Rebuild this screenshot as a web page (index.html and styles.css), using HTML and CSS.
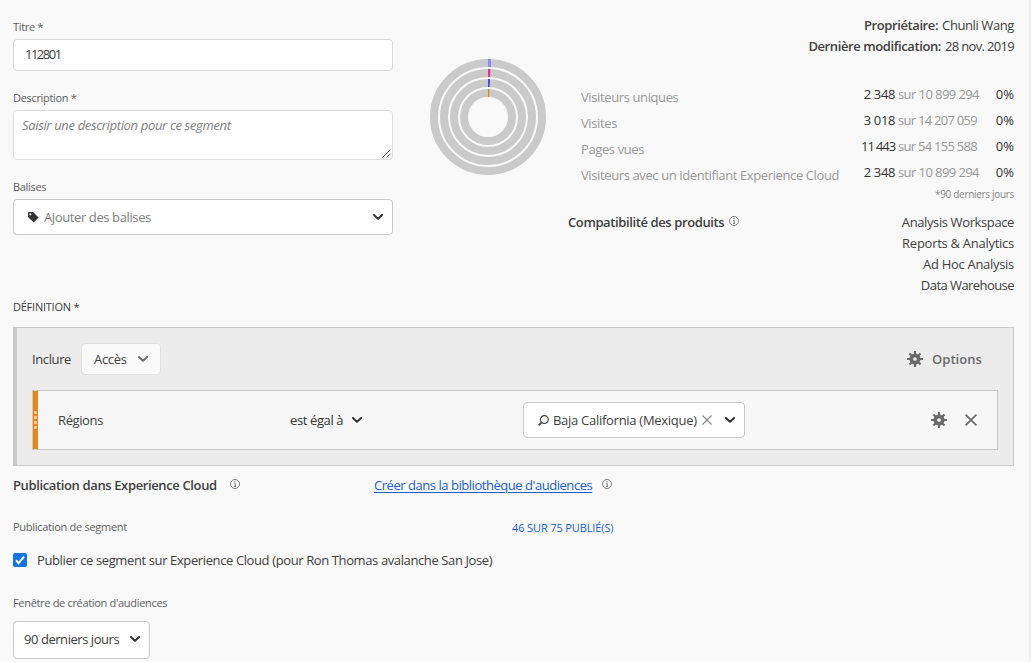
FILE: index.html
```
<!DOCTYPE html>
<html lang="fr">
<head>
<meta charset="utf-8">
<title>Créateur de segments</title>
<link rel="stylesheet" href="styles.css">
</head>
<body>
<svg class="defs" width="0" height="0" aria-hidden="true">
  <symbol id="chevron" viewBox="0 0 10 6"><path d="M1 1l4 3.9L9 1" fill="none" stroke="currentColor" stroke-width="2" stroke-linecap="round" stroke-linejoin="round"/></symbol>
  <symbol id="info" viewBox="0 0 10 10"><circle cx="5" cy="5" r="4.5" fill="none" stroke="currentColor" stroke-width=".8"/><path d="M4.200 4.400h1v3M4.100 7.500h1.900" fill="none" stroke="currentColor" stroke-width=".8"/><circle cx="5" cy="2.700" r=".6" fill="currentColor"/></symbol>
  <symbol id="gear" viewBox="0 0 16 16"><g fill="none" stroke="currentColor"><circle cx="8" cy="8" r="3.700" stroke-width="3.700"/><path d="M8 0v3M8 13v3M0 8h3M13 8h3M2.500 2.500l2 2M11.500 11.500l2 2M2.500 13.500l2-2M11.500 4.500l2-2" stroke-width="2.200"/></g></symbol>
</svg>
<main class="page">
  <section class="top">
    <div class="form">
      <label class="label">Titre *</label>
      <div class="input title-input"><span class="digits">112801</span></div>
      <label class="label">Description *</label>
      <div class="input description"><em>Saisir une description pour ce segment</em>
        <svg class="grip" width="9" height="9" viewBox="0 0 9 9"><path d="M.5 8.500l8-8M4.500 8.500l4-4" stroke="#555" fill="none"/></svg>
      </div>
      <label class="label">Balises</label>
      <div class="input tags">
        <svg width="11" height="11" viewBox="0 0 11 11"><path fill="#323232" fill-rule="evenodd" d="M.7 0H5l5.600 5.500-4.900 5L0 5V.7Q0 0 .7 0zM2.300 1.200a1.100 1.100 0 1 0 0 2.200 1.100 1.100 0 0 0 0-2.200z"/></svg>
        <span>Ajouter des balises</span>
        <svg class="chev"><use href="#chevron"/></svg>
      </div>
    </div>
    <svg class="rings" viewBox="0 0 116 116">
      <g fill="none" stroke="#cacaca" stroke-width="8"><circle cx="58" cy="58" r="54"/><circle cx="58" cy="58" r="44"/><circle cx="58" cy="58" r="34"/><circle cx="58" cy="58" r="24"/></g>
      <path fill="#9088f8" d="M58 0h3v8h-3z"/><path fill="#dc3395" d="M58 10h2.500l-.4 8H58z"/><path fill="#4c48d4" d="M58 20h2l-.4 8H58z"/><path fill="#e68619" d="M58 30h1.400l-.2 8H58z"/>
    </svg>
    <div class="summary">
      <div class="meta"><b>Propriétaire:</b> <span class="name">Chunli Wang</span></div>
      <div class="meta"><b>Dernière modification:</b> <span class="date">28 nov. 2019</span></div>
      <div class="stats">
        <span class="metric">Visiteurs uniques</span><span class="count">2 348</span><span class="total">sur 10 899 294</span><span class="pct">0%</span>
        <span class="metric">Visites</span><span class="count">3 018</span><span class="total tight">sur 14 207 059</span><span class="pct">0%</span>
        <span class="metric">Pages vues</span><span class="count ones">11 443</span><span class="total tight">sur 54 155 588</span><span class="pct">0%</span>
        <span class="metric">Visiteurs avec un identifiant Experience Cloud</span><span class="count">2 348</span><span class="total">sur 10 899 294</span><span class="pct">0%</span>
      </div>
      <div class="note">*90 derniers jours</div>
      <div class="compat">
        <div class="compat-title"><b>Compatibilité des produits</b><svg class="info"><use href="#info"/></svg></div>
        <div class="products"><div>Analysis Workspace</div><div class="reports">Reports &amp; Analytics</div><div class="adhoc">Ad Hoc Analysis</div><div class="warehouse">Data Warehouse</div></div>
      </div>
    </div>
  </section>

  <h2 class="definition-title">DÉFINITION *</h2>
  <section class="definition">
    <div class="container-head">
      <span>Inclure</span>
      <button class="access"><span>Accès</span><svg class="chev grey"><use href="#chevron"/></svg></button>
      <span class="options"><svg class="gear"><use href="#gear"/></svg><b>Options</b></span>
    </div>
    <div class="rule">
      <span class="handle"><i></i><i></i><i></i><i></i></span>
      <span class="dimension">Régions</span>
      <span class="operator">est égal à <svg class="chev"><use href="#chevron"/></svg></span>
      <div class="input value">
        <svg width="11" height="11" viewBox="0 0 11 11"><g fill="none" stroke="#3c3c3c"><circle cx="6.400" cy="4.600" r="3.900" stroke-width="1.200"/><path d="M3.500 7.500L.6 10.400" stroke-width="1.700"/></g></svg>
        <span>Baja California (Mexique)</span>
        <svg class="clear" width="10" height="10" viewBox="0 0 10 10"><path d="M.5.5l9 9M9.500.5l-9 9" stroke="#868686" stroke-width="1.100"/></svg>
        <svg class="chev"><use href="#chevron"/></svg>
      </div>
      <span class="rule-actions"><svg class="gear"><use href="#gear"/></svg><svg width="12" height="12" viewBox="0 0 12 12"><path d="M.6.6l10.800 10.800M11.400.6L.6 11.400" stroke="#6a6a6a" stroke-width="1.700"/></svg></span>
    </div>
  </section>

  <section class="publish-head">
    <b>Publication dans Experience Cloud</b><svg class="info"><use href="#info"/></svg>
    <a class="library">Créer dans la bibliothèque d'audiences</a><svg class="info second"><use href="#info"/></svg>
  </section>
  <section class="publish-row">
    <span class="label">Publication de segment</span>
    <a class="published">46 SUR 75 PUBLIÉ(S)</a>
  </section>
  <label class="check-row">
    <svg width="14" height="14" viewBox="0 0 14 14"><rect width="14" height="14" rx="1.800" fill="#1473e6"/><path d="M3 7.300l2.700 2.900L11 3.700" fill="none" stroke="#fff" stroke-width="2"/></svg>
    <span>Publier ce segment sur Experience Cloud (pour Ron Thomas avalanche San Jose)</span>
  </label>
  <label class="label window-label">Fenêtre de création d'audiences</label>
  <div class="input window"><span>90 derniers jours</span><svg class="chev"><use href="#chevron"/></svg></div>
</main>
</body>
</html>
```
FILE: styles.css
```
* { box-sizing: border-box; }
body {
  margin: 0;
  background: #f9f9f9;
  color: #404040;
  font: 450 13px/21px "Open Sans", "Noto Sans", sans-serif;
  letter-spacing: -0.385px;
}
svg { display: block; flex: none; }
b { font-weight: 650; color: #404040; }
.defs { position: absolute; }
.page {
  width: 1031px;
  height: 662px;
  overflow: hidden;
  padding: 0 15px 0 13px;
  border-right: 2px solid #f0f0f0;
}
.chev { width: 10px; height: 6px; color: #323232; }
.chev.grey { color: #6e6e6e; }
.gear { width: 16px; height: 16px; color: #6a6a6a; }
.info { width: 10px; height: 10px; color: #5a5a5a; }
.label {
  display: block;
  font-size: 11px;
  line-height: 16px;
  letter-spacing: -0.32px;
  color: #606060;
}
.input {
  display: flex;
  align-items: center;
  background: #fff;
  border: 1px solid #cacaca;
  border-radius: 4px;
}

/* Segment form and summary */
.top { display: flex; height: 297px; }
.form { width: 380px; padding-top: 19px; }
.title-input { height: 32px; margin: 4px 0 19px; padding: 0 0 2px 11px; border-color: #d9d9d9; }
.digits { letter-spacing: -1.5px; }
.description {
  position: relative;
  height: 50px;
  margin: 4px 0 19px;
  padding: 4px 8px;
  align-items: flex-start;
  border-color: #dedede;
  color: #808080;
  letter-spacing: -0.34px;
}
.grip { position: absolute; right: 1px; bottom: 1px; }
.tags { height: 36px; margin-top: 4px; padding: 0 9px 0 14px; gap: 5px; color: #808080; }
.tags .chev { margin-left: auto; }
.rings { width: 116px; height: 116px; margin: 59px 22px 0 37px; }
.summary { flex: 1; padding-top: 15px; }
.meta { text-align: right; height: 21px; }
.name { letter-spacing: -0.4px; }
.date { letter-spacing: -0.67px; }
.meta b { letter-spacing: -0.4px; margin-right: 1px; }
.stats {
  display: grid;
  grid-template-columns: 265px 49px 1fr auto;
  grid-auto-rows: 26px;
  padding: 27px 0 0 13px;
}
.metric { color: #989898; padding-top: 3px; }
.count { text-align: right; color: #323232; }
.count.ones { letter-spacing: -1.1px; }
.total { padding-left: 3px; color: #989898; letter-spacing: -0.58px; }
.total.tight { letter-spacing: -0.72px; }
.pct { color: #323232; letter-spacing: 0; }
.note {
  height: 16px;
  margin-top: -2px;
  font-size: 10px;
  line-height: 16px;
  letter-spacing: -0.31px;
  text-align: right;
  color: #888;
}
.compat { display: flex; justify-content: space-between; padding-top: 10px; }
.compat-title { display: flex; gap: 5px; height: 21px; }
.compat-title b { width: 156px; white-space: nowrap; letter-spacing: -0.39px; }
.compat-title .info { margin-top: 4px; }
.products { text-align: right; }
.reports { letter-spacing: -0.27px; }
.adhoc { letter-spacing: -0.3px; }
.warehouse { letter-spacing: -0.56px; }

/* Definition canvas */
.definition-title {
  margin: 0;
  height: 30px;
  font-size: 11px;
  font-weight: 450;
  line-height: 20px;
  letter-spacing: -0.24px;
}
.definition {
  height: 139px;
  padding: 15px 15px 0;
  background: #ececec;
  border: 1px solid #cacaca;
  border-left-width: 4px;
}
.container-head { display: flex; align-items: center; height: 32px; }
.container-head > span:first-child { width: 39px; }
.access {
  display: flex;
  align-items: center;
  justify-content: space-between;
  width: 80px;
  height: 32px;
  margin-left: 10px;
  padding: 0 12px;
  background: #fafafa;
  border: 1px solid #e1e1e1;
  border-radius: 4px;
  font: inherit;
  letter-spacing: -0.3px;
  color: #404040;
}
.options { display: flex; align-items: center; gap: 9px; margin: 0 15px 0 auto; letter-spacing: 0.05px; }
.options b { color: #6a6a6a; width: 51px; }
.rule {
  display: grid;
  grid-template-columns: 5px 252px 233px 222px 1fr;
  align-items: center;
  height: 60px;
  margin-top: 15px;
  background: #f7f7f7;
  border: 1px solid #cacaca;
}
.handle {
  align-self: stretch;
  display: flex;
  flex-direction: column;
  align-items: center;
  justify-content: center;
  gap: 2px;
  background: #e68619;
}
.handle i { width: 3px; height: 3px; border-radius: 1px; background: #f6cfa2; }
.dimension { padding-left: 20px; }
.operator { display: flex; align-items: center; gap: 9px; color: #323232; }
.value { height: 36px; padding: 0 9px 0 14px; }
.value span { margin-left: 4px; width: 144px; white-space: nowrap; letter-spacing: -0.28px; }
.clear { margin-left: 5px; }
.value .chev { margin-left: auto; }
.rule-actions { display: flex; align-items: center; justify-content: flex-end; gap: 18px; padding-right: 20px; }

/* Publishing */
.publish-head { display: flex; height: 39px; padding-top: 9px; }
.publish-head b { width: 217px; letter-spacing: -0.37px; }
.publish-head .info { margin-top: 4px; }
.library { width: 219px; margin-left: 134px; color: #1a5fd0; letter-spacing: -0.46px; text-decoration: underline; text-underline-offset: 2px; white-space: nowrap; }
.publish-head .second { margin-left: 9px; }
.publish-row { display: flex; padding-top: 14px; height: 44px; }
.publish-row .label { width: 499px; letter-spacing: -0.28px; }
.published { font-size: 11px; line-height: 18px; letter-spacing: -0.12px; color: #1a5fd0; }
.check-row { display: flex; align-items: center; gap: 10px; height: 22px; }
.window-label { margin: 24px 0 10px; }
.window { width: 137px; height: 38px; padding: 0 9px 2px 10px; justify-content: space-between; letter-spacing: -0.45px; }
```
